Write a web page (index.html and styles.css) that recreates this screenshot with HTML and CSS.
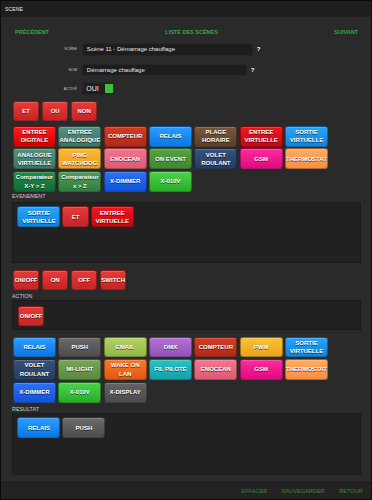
FILE: index.html
```html
<!DOCTYPE html>
<html>
    <head>
        <meta charset="utf-8">
        <title>SCENE</title>
        <link rel="stylesheet" href="styles.css">
    </head>
    <body>
        <div class="window">
            <div class="titlebar">SCENE</div>
            <div class="content">
                <div class="nav">
                    <span>PRÉCÉDENT</span>
                    <span>LISTE DES SCÈNES</span>
                    <span>SUIVANT</span>
                </div>

                <div class="field row-scene">
                    <label>SCÈNE</label>
                    <div class="input wide">Scène 11 - Démarrage chauffage</div>
                    <span class="help">?</span>
                </div>
                <div class="field row-nom">
                    <label>NOM</label>
                    <div class="input narrow">Démarrage chauffage</div>
                    <span class="help">?</span>
                </div>
                <div class="field row-active">
                    <label>ACTIVÉ</label>
                    <div class="toggle">OUI <span class="check"></span></div>
                </div>

                <div class="buttons logic">
                    <div class="btn sm red">ET</div>
                    <div class="btn sm red">OU</div>
                    <div class="btn sm red">NON</div>
                </div>

                <div class="buttons grid events">
                    <div class="btn digital">ENTREE<br>DIGITALE</div>
                    <div class="btn teal">ENTREE<br>ANALOGIQUE</div>
                    <div class="btn compteur">COMPTEUR</div>
                    <div class="btn blue">RELAIS</div>
                    <div class="btn brown">PLAGE<br>HORAIRE</div>
                    <div class="btn vred">ENTREE<br>VIRTUELLE</div>
                    <div class="btn sky">SORTIE<br>VIRTUELLE</div>
                    <div class="btn teal">ANALOGUE<br>VIRTUELLE</div>
                    <div class="btn ping">PING<br>WATCHDOG</div>
                    <div class="btn pink">ENOCEAN</div>
                    <div class="btn leaf">ON EVENT</div>
                    <div class="btn navy">VOLET<br>ROULANT</div>
                    <div class="btn gsm">GSM</div>
                    <div class="btn thermo">THERMOSTAT</div>
                    <div class="btn forest">Comparateur<br>X-Y &gt; Z</div>
                    <div class="btn moss">Comparateur<br>x &gt; Z</div>
                    <div class="btn royal">X-DIMMER</div>
                    <div class="btn lime">X-010V</div>
                </div>

                <div class="section">EVENEMENT</div>
                <div class="dropzone ev">
                    <div class="btn sky">SORTIE<br>VIRTUELLE</div>
                    <div class="btn sm red">ET</div>
                    <div class="btn vred">ENTREE<br>VIRTUELLE</div>
                </div>

                <div class="buttons modes">
                    <div class="btn sm red">ON/OFF</div>
                    <div class="btn sm red">ON</div>
                    <div class="btn sm red">OFF</div>
                    <div class="btn sm red">SWITCH</div>
                </div>

                <div class="section">ACTION</div>
                <div class="dropzone act">
                    <div class="btn sm red">ON/OFF</div>
                </div>

                <div class="buttons grid actions">
                    <div class="btn blue">RELAIS</div>
                    <div class="btn grey">PUSH</div>
                    <div class="btn email">EMAIL</div>
                    <div class="btn dmx">DMX</div>
                    <div class="btn compteur">COMPTEUR</div>
                    <div class="btn pwm">PWM</div>
                    <div class="btn sky">SORTIE<br>VIRTUELLE</div>
                    <div class="btn navy">VOLET<br>ROULANT</div>
                    <div class="btn milight">MI-LIGHT</div>
                    <div class="btn wake">WAKE ON<br>LAN</div>
                    <div class="btn cyan">FIL PILOTE</div>
                    <div class="btn pink">ENOCEAN</div>
                    <div class="btn gsm">GSM</div>
                    <div class="btn thermo">THERMOSTAT</div>
                    <div class="btn royal">X-DIMMER</div>
                    <div class="btn lime">X-010V</div>
                    <div class="btn dgrey">X-DISPLAY</div>
                </div>

                <div class="section">RESULTAT</div>
                <div class="dropzone res">
                    <div class="btn blue">RELAIS</div>
                    <div class="btn grey">PUSH</div>
                </div>
            </div>
            <div class="footer">
                <span>EFFACER</span>
                <span>SAUVEGARDER</span>
                <span>RETOUR</span>
            </div>
        </div>
    </body>
</html>
```

FILE: styles.css
```css
* {
    margin: 0;
    padding: 0;
    box-sizing: border-box;
}
body {
    background: #111;
    font-family: "Liberation Sans", Arial, sans-serif;
}
.window {
    width: 372px;
    height: 500px;
    border: 1px solid #0c0c0c;
    background: #2a2a2a;
    display: flex;
    flex-direction: column;
}
.titlebar {
    height: 16px;
    line-height: 17px;
    padding-left: 4px;
    background: #1f1f1f;
    color: #e6e6e6;
    font-size: 5.2px;
}
.content {
    flex: 1;
    padding: 0 10px 0 11px;
}
.nav {
    margin-top: 10px;
    height: 11px;
    line-height: 11px;
    padding: 0 3px;
    display: flex;
    justify-content: space-between;
    color: #3aa845;
    font-size: 5.5px;
    font-weight: bold;
}

/* form */
.field {
    display: flex;
    align-items: center;
    height: 12.5px;
}
.field label {
    width: 65px;
    text-align: right;
    color: #c4c4c4;
    font-size: 3.7px;
    margin-right: 5.3px;
}
.row-scene { margin-top: 5px; }
.row-nom { margin-top: 8px; }
.row-active { margin-top: 6px; height: 13px; }
.input {
    height: 100%;
    background: #1d1d1d;
    border: 1px solid #262626;
    color: #e8e8e8;
    font-size: 6px;
    line-height: 10.5px;
    padding-left: 3.5px;
    border-radius: 1px;
}
.input.wide { width: 171px; }
.input.narrow { width: 165px; }
.help {
    margin-left: 3.5px;
    color: #fff;
    font-size: 6px;
    font-weight: bold;
}
.toggle {
    width: 32px;
    height: 100%;
    background: #1f1f1f;
    border: 1px solid #262626;
    color: #f0f0f0;
    font-size: 7px;
    display: flex;
    align-items: center;
    padding-left: 3px;
}
.check {
    width: 8.5px;
    height: 8.5px;
    margin-left: 6px;
    background: #3fbf3f;
}

/* buttons */
.buttons {
    margin-left: 1px;
    display: flex;
    flex-wrap: wrap;
    column-gap: 2.6px;
}
.buttons.grid {
    display: grid;
    grid-template-columns: repeat(7, 43px);
    column-gap: 2.33px;
}
.logic { margin-top: 6px; }
.events { margin-top: 4.7px; row-gap: 1.7px; }
.events .btn { height: 21px; }
.modes { margin-top: 7px; }
.actions { margin-top: 6.3px; row-gap: 2.2px; }
.actions .btn { height: 20.5px; }
.btn {
    width: 43px;
    height: 20px;
    display: flex;
    align-items: center;
    justify-content: center;
    text-align: center;
    color: #fff;
    font-size: 6px;
    line-height: 8.2px;
    font-weight: bold;
    text-shadow: 0 0.6px 0.6px rgba(0, 0, 0, 0.6);
    border-radius: 3px;
    border: 1px solid rgba(0, 0, 0, 0.35);
    box-shadow: inset 0 1px 0 rgba(255, 255, 255, 0.18);
}
.btn.sm { width: 26.4px; }
.red { background: linear-gradient(#e63b3b, #c92323); }
.digital { background: linear-gradient(#ff1c1c, #d20000); }
.teal { background: linear-gradient(#55917f, #3d7464); }
.compteur { background: linear-gradient(#d13c26, #b02a18); }
.blue { background: linear-gradient(#2b9dff, #0a77e6); }
.brown { background: linear-gradient(#7a5738, #5d3f27); }
.vred { background: linear-gradient(#f2151f, #c30911); }
.sky { background: linear-gradient(#2aa2f8, #0a85e4); }
.ping { background: linear-gradient(#f8b834, #ee9f21); }
.pink { background: linear-gradient(#f2768d, #df5a73); }
.leaf { background: linear-gradient(#58a243, #3f8a2f); }
.navy { background: linear-gradient(#36527b, #243e61); }
.gsm { background: linear-gradient(#ff2c9c, #df0a80); }
.thermo { background: linear-gradient(#ffab62, #f98e40); }
.forest { background: linear-gradient(#208c48, #146b34); }
.moss { background: linear-gradient(#4d9c5a, #357d43); }
.royal { background: linear-gradient(#2d71f2, #1052d8); }
.lime { background: linear-gradient(#4cd24c, #27ae27); }
.grey { background: linear-gradient(#6b6969, #4f4c4c); }
.email { background: linear-gradient(#b2d264, #92b748); }
.dmx { background: linear-gradient(#b474d4, #9252b9); }
.pwm { background: linear-gradient(#f9c234, #eca31c); }
.milight { background: linear-gradient(#77a65b, #5a8a40); }
.wake { background: linear-gradient(#fa7724, #df5a10); }
.cyan { background: linear-gradient(#2ac2c2, #12a1a8); }
.dgrey { background: linear-gradient(#646262, #4d4b4b); }

/* sections */
.section {
    height: 8px;
    line-height: 8px;
    color: #cfcfcf;
    font-size: 5.4px;
}
.dropzone {
    display: flex;
    align-items: flex-start;
    column-gap: 2px;
    background: #212121;
    border: 1px solid #1b1b1b;
    padding: 3.3px 4.4px;
}
.ev { margin-top: 2px; height: 61.3px; }
.ev .btn { height: 20.7px; }
.act { height: 30px; padding-top: 4.3px; padding-left: 5px; }
.res { height: 62.8px; padding-top: 3.8px; }
.res .btn { height: 20.7px; }
.modes + .section { margin-top: 2px; }
.actions + .section { margin-top: 2px; }

.footer {
    height: 17px;
    background: #232323;
    border-top: 1px solid #1a1a1a;
    display: flex;
    justify-content: flex-end;
    align-items: center;
    column-gap: 14.5px;
    padding-right: 8.3px;
    color: #2f8d34;
    font-size: 5.6px;
}
```
